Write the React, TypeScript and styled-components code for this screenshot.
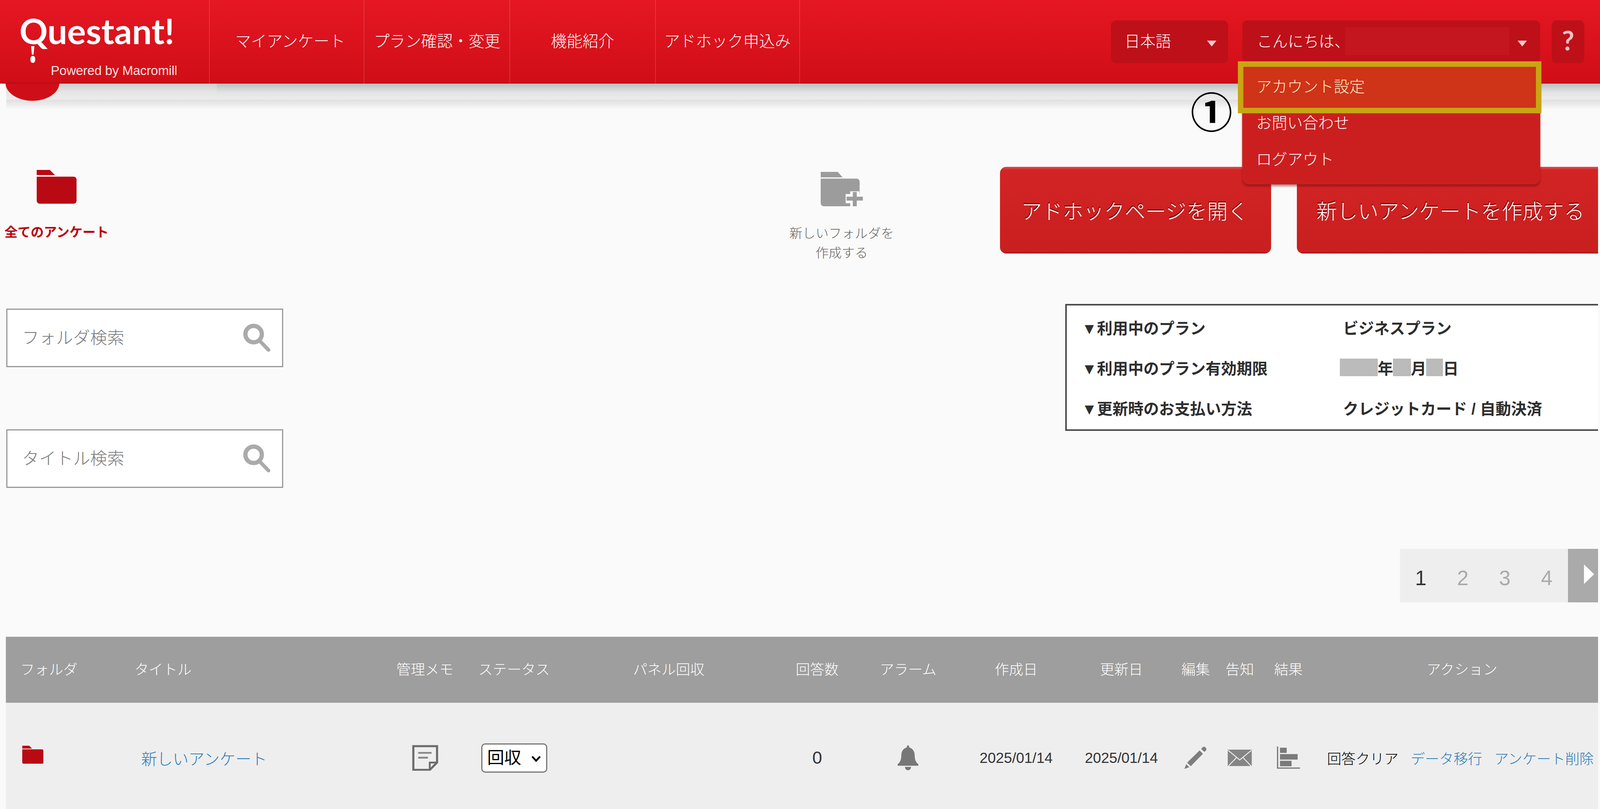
import React from 'react';
import styled, { createGlobalStyle } from 'styled-components';

const SANS = `"Liberation Sans", "Noto Sans CJK JP", sans-serif`;

// The window was asked for at 5259x2071 but measured 4096x2071 (innerWidth, dpr 1), so a
// fixed 5259 wide page is cut off at the right. Horizontal sizes and type therefore follow
// the window width (5259 wide = 1:1 with the design) and vertical sizes stay in px, so the
// page fills the frame at either width. At 4096 the type is 78% of the reference size.
const u = (n: number) => `calc(${n} * 100vw / 5259)`;

const GlobalStyle = createGlobalStyle`
  html, body {
    margin: 0;
    padding: 0;
    background: #fafafa;
  }
  * {
    box-sizing: border-box;
  }
`;

const COLUMNS = [
  { label: 'フォルダ', width: 401, align: 'left', pad: 48 },
  { label: 'タイトル', width: 820, align: 'left', pad: 22 },
  { label: '管理メモ', width: 314, align: 'center', pad: 0 },
  { label: 'ステータス', width: 272, align: 'center', pad: 0 },
  { label: 'パネル回収', width: 744, align: 'center', pad: 0 },
  { label: '回答数', width: 232, align: 'center', pad: 0 },
  { label: 'アラーム', width: 366, align: 'center', pad: 0 },
  { label: '作成日', width: 344, align: 'center', pad: 0 },
  { label: '更新日', width: 348, align: 'center', pad: 0 },
  { label: '編集', width: 140, align: 'center', pad: 0 },
  { label: '告知', width: 150, align: 'center', pad: 0 },
  { label: '結果', width: 170, align: 'center', pad: 0 },
  { label: 'アクション', width: 933, align: 'center', pad: 38 },
];
const GRID = COLUMNS.map((c) => u(c.width)).join(' ');

const NAV_ITEMS = [
  { label: 'マイアンケート', width: 509, shift: 22 },
  { label: 'プラン確認・変更', width: 478, shift: 0 },
  { label: '機能紹介', width: 479, shift: 0 },
  { label: 'アドホック申込み', width: 476, shift: 0 },
];

const Icon = styled.svg<{ $w: number; $h: number }>`
  display: block;
  flex: none;
  width: ${(p) => u(p.$w)};
  height: ${(p) => u(p.$h)};
`;

function FolderIcon(props: { w: number; h: number }) {
  return (
    <Icon $w={props.w} $h={props.h} viewBox="0 0 131 111" preserveAspectRatio="none" fill="#b90a14">
      <path d="M0 0H43L60 17H0Z" />
      <path d="M0 22H121a10 10 0 0 1 10 10V101a10 10 0 0 1-10 10H10a10 10 0 0 1-10-10Z" />
    </Icon>
  );
}

function NewFolderIcon() {
  return (
    <Icon $w={139} $h={113} viewBox="0 0 139 113">
      <path fill="#9c9c9c" d="M0 0H56L72 18H0Z" />
      <path fill="#9c9c9c" d="M0 22H118a10 10 0 0 1 10 10V103a10 10 0 0 1-10 10H10a10 10 0 0 1-10-10Z" />
      <path stroke="#fafafa" strokeWidth="30" d="M112 64V113M82 88H139" />
      <path stroke="#9c9c9c" strokeWidth="13" d="M112 66V113M85 88H139" />
    </Icon>
  );
}

function SearchIcon() {
  return (
    <Icon $w={91} $h={94} viewBox="0 0 91 94" fill="none" stroke="#aaaaaa">
      <circle cx="35" cy="35" r="27" strokeWidth="14" />
      <path d="M56 58L84 87" strokeWidth="12" strokeLinecap="round" />
    </Icon>
  );
}

function MemoIcon() {
  return (
    <Icon $w={86} $h={86} viewBox="0 0 86 86" fill="none" stroke="#6c6c6c">
      <path d="M4 4H82V58L58 82H4Z" strokeWidth="7" />
      <path d="M58 80V58H80" strokeWidth="6" />
      <path d="M20 26H64M20 42H52" strokeWidth="6" stroke="#888888" />
    </Icon>
  );
}

function BellIcon() {
  return (
    <Icon $w={68} $h={82} viewBox="0 0 68 82" fill="#777777">
      <path d="M34 0c3 0 4 3 4 7c12 3 18 14 18 26c0 14 4 23 12 29v5H0v-5c8-6 12-15 12-29c0-12 6-23 18-26c0-4 1-7 4-7Z" />
      <path d="M24 71H44a10 11 0 0 1-20 0Z" />
    </Icon>
  );
}

function PencilIcon() {
  return (
    <Icon $w={73} $h={74} viewBox="0 0 73 74" fill="#7d7d7d">
      <path d="M50 13L61 24L21 65L9 53Z" />
      <path d="M55 8L60 3C63 0 66 0 69 3L71 5C73 8 73 10 71 13L66 18Z" />
      <path d="M6 58L16 68L0 74Z" />
    </Icon>
  );
}

function MailIcon() {
  return (
    <Icon $w={79} $h={55} viewBox="0 0 79 55">
      <rect width="79" height="55" fill="#858585" />
      <path d="M1 2L39.5 34L78 2M2 54L29 26M77 54L50 26" fill="none" stroke="#eeeeee" strokeWidth="3" />
    </Icon>
  );
}

function ChartIcon() {
  return (
    <Icon $w={76} $h={74} viewBox="0 0 76 74">
      <path d="M2 0V71H76" fill="none" stroke="#777777" strokeWidth="4" />
      <rect x="10" y="4" width="22" height="17" fill="#7a7a7a" />
      <rect x="10" y="25" width="58" height="18" fill="#7a7a7a" />
      <rect x="10" y="47" width="38" height="18" fill="#7a7a7a" />
    </Icon>
  );
}

export default function App() {
  return (
    <Page>
      <GlobalStyle />
      <Header>
        <Logo>
          <LogoName>Questant!</LogoName>
          <LogoTagline>Powered by Macromill</LogoTagline>
        </Logo>
        <Nav>
          {NAV_ITEMS.map((item) => (
            <NavItem key={item.label} $width={item.width} $shift={item.shift}>
              {item.label}
            </NavItem>
          ))}
        </Nav>
        <HeaderTools>
          <LanguageBox>
            日本語
            <DropArrow />
          </LanguageBox>
          <UserBox>
            こんにちは、
            <UserMask />
            <DropArrow />
            <UserMenu>
              <MenuItem $highlighted>アカウント設定</MenuItem>
              <MenuItem>お問い合わせ</MenuItem>
              <MenuItem>ログアウト</MenuItem>
              <StepMark>①</StepMark>
            </UserMenu>
          </UserBox>
          <HelpBox>?</HelpBox>
        </HeaderTools>
      </Header>
      <HeaderBand>
        <LogoDrop />
      </HeaderBand>

      <TopArea>
        <SideColumn>
          <AllFolders>
            <IconSlot $height={111}>
              <FolderIcon w={131} h={111} />
            </IconSlot>
            <AllFoldersLabel>全てのアンケート</AllFoldersLabel>
          </AllFolders>
          <SearchBox $top={180}>
            <SearchInput placeholder="フォルダ検索" readOnly />
            <SearchIcon />
          </SearchBox>
          <SearchBox $top={159}>
            <SearchInput placeholder="タイトル検索" readOnly />
            <SearchIcon />
          </SearchBox>
        </SideColumn>

        <NewFolder>
          <IconSlot $height={113}>
            <NewFolderIcon />
          </IconSlot>
          <NewFolderLabel>
            新しいフォルダを
            <br />
            作成する
          </NewFolderLabel>
        </NewFolder>

        <MainColumn>
          <ButtonRow>
            <RedButton $width={891} $pad={70}>アドホックページを開く</RedButton>
            <RedButton $width={990} $pad={64} $squareEnd>新しいアンケートを作成する</RedButton>
          </ButtonRow>
          <PlanBox>
            <PlanRow>
              <PlanLabel>▼利用中のプラン</PlanLabel>
              <PlanValue>ビジネスプラン</PlanValue>
            </PlanRow>
            <PlanRow>
              <PlanLabel>▼利用中のプラン有効期限</PlanLabel>
              <PlanValue $shift={-10}>
                <DateMask $width={124} />年<DateMask $width={58} />月<DateMask $width={55} />日
              </PlanValue>
            </PlanRow>
            <PlanRow>
              <PlanLabel>▼更新時のお支払い方法</PlanLabel>
              <PlanValue>クレジットカード / 自動決済</PlanValue>
            </PlanRow>
          </PlanBox>
        </MainColumn>
      </TopArea>

      <Pager>
        <PagerNumber $current>1</PagerNumber>
        <PagerNumber>2</PagerNumber>
        <PagerNumber>3</PagerNumber>
        <PagerNumber>4</PagerNumber>
        <PagerNext />
      </Pager>

      <Table>
        <HeadRow>
          {COLUMNS.map((col) => (
            <HeadCell key={col.label} $align={col.align} $pad={col.pad}>
              {col.label}
            </HeadCell>
          ))}
        </HeadRow>
        <BodyRow>
          <Cell $align="left" $pad={54}>
            <RowFolder>
              <FolderIcon w={70} h={60} />
            </RowFolder>
          </Cell>
          <Cell $align="left" $pad={44}>
            <TitleLink>新しいアンケート</TitleLink>
          </Cell>
          <Cell>
            <MemoIcon />
          </Cell>
          <Cell>
            <StatusPicker>
              <StatusSelect defaultValue="回収">
                <option>回収</option>
              </StatusSelect>
              <StatusChevron viewBox="0 0 32 22" fill="none" stroke="#111111" strokeWidth="6">
                <path d="M3 4L16 18L29 4" />
              </StatusChevron>
            </StatusPicker>
          </Cell>
          <Cell />
          <Cell>
            <CountText>0</CountText>
          </Cell>
          <Cell>
            <BellIcon />
          </Cell>
          <Cell>
            <DateText>2025/01/14</DateText>
          </Cell>
          <Cell>
            <DateText>2025/01/14</DateText>
          </Cell>
          <Cell>
            <PencilIcon />
          </Cell>
          <Cell>
            <MailIcon />
          </Cell>
          <Cell>
            <ChartIcon />
          </Cell>
          <Cell $align="left" $pad={42}>
            <Actions>
              <ActionText>回答クリア</ActionText>
              <ActionLink>データ移行</ActionLink>
              <ActionLink>アンケート削除</ActionLink>
            </Actions>
          </Cell>
        </BodyRow>
      </Table>
    </Page>
  );
}

const Page = styled.div`
  position: relative;
  width: 100vw;
  height: 2071px;
  overflow: hidden;
  background: #fafafa;
  font-family: ${SANS};
`;

const Header = styled.header`
  position: relative;
  z-index: 2;
  display: flex;
  align-items: center;
  height: 214px;
  padding-right: ${u(51)};
  background: linear-gradient(180deg, #e51723 0%, #d00e17 98%, #b00c14 100%);
`;

const Logo = styled.div`
  display: flex;
  flex-direction: column;
  flex: none;
  width: ${u(687)};
  height: 214px;
  padding: 14px 0 0 ${u(64)};
  color: #ffffff;
`;

const LogoName = styled.div`
  position: relative;
  font-family: Lato, "Liberation Sans", sans-serif;
  font-size: ${u(115)};
  font-weight: 700;
  line-height: 130px;
  white-space: nowrap;

  &::before {
    content: '';
    position: absolute;
    left: ${u(38)};
    top: 104px;
    width: ${u(11)};
    height: 22px;
    background: #ffffff;
    clip-path: polygon(0 0, 100% 0, 75% 100%, 25% 100%);
  }

  &::after {
    content: '';
    position: absolute;
    left: ${u(36)};
    top: 129px;
    width: ${u(15)};
    height: 18px;
    border-radius: 7px;
    background: #ffffff;
  }
`;

const LogoTagline = styled.div`
  margin: 14px 0 0 ${u(103)};
  font-size: ${u(43)};
  line-height: 46px;
  letter-spacing: -0.3px;
  opacity: 0.88;
  white-space: nowrap;
`;

const Nav = styled.nav`
  display: flex;
  flex: none;
  height: 100%;
`;

const NavItem = styled.a<{ $width: number; $shift: number }>`
  display: flex;
  align-items: center;
  justify-content: center;
  width: ${(p) => u(p.$width)};
  padding-left: ${(p) => u(p.$shift)};
  padding-bottom: 10px;
  border-left: 2px solid rgba(255, 255, 255, 0.14);
  color: #ffffff;
  font-size: ${u(52)};
  font-weight: 300;
  white-space: nowrap;

  &:last-child {
    border-right: 2px solid rgba(255, 255, 255, 0.14);
  }
`;

const HeaderTools = styled.div`
  display: flex;
  gap: ${u(38)};
  margin-left: auto;
`;

const ToolBox = styled.div`
  position: relative;
  display: flex;
  flex: none;
  align-items: center;
  height: 110px;
  padding-bottom: 10px;
  border-radius: 14px;
  background: #be1019;
  color: #ffffff;
  font-size: ${u(51)};
  font-weight: 300;
  white-space: nowrap;
`;

const LanguageBox = styled(ToolBox)`
  justify-content: space-between;
  width: ${u(384)};
  margin-right: ${u(9)};
  padding-left: ${u(44)};
  padding-right: ${u(38)};
`;

const UserBox = styled(ToolBox)`
  justify-content: space-between;
  width: ${u(979)};
  padding-left: ${u(48)};
  padding-right: ${u(43)};
`;

const UserMask = styled.span`
  position: absolute;
  left: ${u(339)};
  top: 18px;
  width: ${u(539)};
  height: 71px;
  background: #c4161f;
`;

const DropArrow = styled.span`
  flex: none;
  width: 0;
  height: 0;
  margin-top: 18px;
  border-left: ${u(16)} solid transparent;
  border-right: ${u(16)} solid transparent;
  border-top: ${u(20)} solid rgba(255, 255, 255, 0.78);
`;

const HelpBox = styled(ToolBox)`
  justify-content: center;
  width: ${u(108)};
  color: rgba(255, 255, 255, 0.75);
  font-family: Lato, "Liberation Sans", sans-serif;
  font-size: ${u(88)};
  font-weight: 700;
`;

const UserMenu = styled.div`
  position: absolute;
  left: 0;
  top: 105px;
  width: ${u(979)};
  height: 315px;
  padding-top: 15px;
  border-radius: 0 0 16px 16px;
  background: #cb1f1f;
  box-shadow: 0 5px 5px rgba(90, 10, 10, 0.45);
`;

const MenuItem = styled.div<{ $highlighted?: boolean }>`
  position: relative;
  z-index: ${(p) => (p.$highlighted ? 1 : 'auto')};
  display: flex;
  align-items: center;
  height: 93px;
  padding-left: ${u(46)};
  color: ${(p) => (p.$highlighted ? '#ffeccb' : '#ffffff')};
  font-size: ${u(51)};
  font-weight: 300;

  &::before {
    content: ${(p) => (p.$highlighted ? "''" : 'none')};
    position: absolute;
    z-index: -1;
    top: -15px;
    left: ${u(-14)};
    right: ${u(-5)};
    bottom: -25px;
    border: 14px solid #c8a512;
    background: #cf3318;
  }
`;

const StepMark = styled.span`
  position: absolute;
  left: ${u(-170)};
  top: 39px;
  color: #000000;
  font-family: "Noto Sans CJK JP", sans-serif;
  font-size: ${u(138)};
  font-weight: 700;
  line-height: 170px;
`;

const HeaderBand = styled.div`
  position: relative;
  height: 41px;
  margin-left: ${u(20)};
  background: linear-gradient(180deg, #b8c0c0 0%, #e2e4e4 55%, #ececec 100%);

  &::before {
    content: '';
    position: absolute;
    left: 0;
    top: 0;
    width: ${u(693)};
    height: 100%;
    background: linear-gradient(180deg, #cfcfcf 0%, #e6e6e6 55%, #ececec 100%);
  }

  &::after {
    content: '';
    position: absolute;
    left: 0;
    right: 0;
    top: 100%;
    height: 26px;
    background: linear-gradient(180deg, #dfdfdf 0%, #fafafa 100%);
  }
`;

const LogoDrop = styled.div`
  position: absolute;
  z-index: 1;
  left: ${u(-2)};
  top: -2px;
  width: ${u(177)};
  height: 46px;
  border-radius: 0 0 50% 50% / 0 0 100% 100%;
  background: #cf0f18;
`;

const TopArea = styled.div`
  display: flex;
  height: 1150px;
`;

const IconSlot = styled.div<{ $height: number }>`
  display: flex;
  flex: none;
  align-items: center;
  justify-content: center;
  height: ${(p) => p.$height}px;
`;

const SideColumn = styled.div`
  display: flex;
  flex-direction: column;
  flex: none;
  width: ${u(951)};
  padding-top: 168px;
`;

const AllFolders = styled.div`
  display: flex;
  flex-direction: column;
  align-items: center;
  width: ${u(372)};
  height: 187px;
`;

const AllFoldersLabel = styled.div`
  margin-top: 31px;
  color: #b80010;
  font-size: ${u(43)};
  font-weight: 700;
  line-height: 60px;
  white-space: nowrap;
`;

const SearchBox = styled.div<{ $top: number }>`
  display: flex;
  align-items: center;
  justify-content: space-between;
  width: ${u(911)};
  height: 150px;
  margin: ${(p) => p.$top}px 0 0 ${u(20)};
  padding: 0 ${u(37)} 0 ${u(46)};
  border: 3px solid #999999;
  background: #ffffff;
`;

const SearchInput = styled.input`
  width: ${u(600)};
  border: 0;
  outline: 0;
  background: transparent;
  color: #777777;
  font-family: ${SANS};
  font-size: ${u(56)};
  font-weight: 300;

  &::placeholder {
    color: #7a7a7a;
    opacity: 1;
  }
`;

const NewFolder = styled.div`
  display: flex;
  flex-direction: column;
  flex: none;
  align-items: center;
  width: ${u(345)};
  margin-left: ${u(1643)};
  padding-top: 172px;
`;

const NewFolderLabel = styled.div`
  margin-top: 33px;
  color: #666666;
  font-size: ${u(43)};
  font-weight: 300;
  line-height: 50px;
  text-align: center;
  white-space: nowrap;
`;

const MainColumn = styled.div`
  display: flex;
  flex-direction: column;
  margin-left: ${u(348)};
  padding-top: 172px;
`;

const ButtonRow = styled.div`
  display: flex;
  gap: ${u(85)};
`;

const RedButton = styled.a<{ $width: number; $pad: number; $squareEnd?: boolean }>`
  display: flex;
  flex: none;
  align-items: center;
  width: ${(p) => u(p.$width)};
  height: 222px;
  padding-left: ${(p) => u(p.$pad)};
  border-radius: ${(p) => (p.$squareEnd ? '16px 0 0 16px' : '16px')};
  background: linear-gradient(180deg, #de5353 0, #d32424 8px, #c91f1f 98%, #8e1a1a 100%);
  color: #ffffff;
  font-size: ${u(68)};
  font-weight: 300;
  text-shadow: -1px -3px 0 #7a0000;
  white-space: nowrap;
`;

const PlanBox = styled.div`
  display: flex;
  flex-direction: column;
  justify-content: center;
  width: ${u(1752)};
  height: 325px;
  margin: 129px 0 0 ${u(214)};
  padding-left: ${u(49)};
  border: 4px solid #4a4a4a;
  border-right: 0;
  background: #ffffff;
`;

const PlanRow = styled.div`
  display: flex;
  align-items: center;
  height: 103px;
  color: #2e2e2e;
  font-size: ${u(51)};
  font-weight: 700;
  white-space: nowrap;
`;

const PlanLabel = styled.span`
  flex: none;
  width: ${u(859)};
`;

const PlanValue = styled.span<{ $shift?: number }>`
  display: flex;
  align-items: center;
  margin-left: ${(p) => u(p.$shift || 0)};
`;

const DateMask = styled.span<{ $width: number }>`
  display: inline-block;
  width: ${(p) => u(p.$width)};
  height: 45px;
  background: #bbbbbb;
`;

const Pager = styled.div`
  display: flex;
  width: ${u(652)};
  height: 137px;
  margin-left: ${u(4601)};
  background: #eeeeee;
`;

const PagerNumber = styled.span<{ $current?: boolean }>`
  display: flex;
  align-items: center;
  justify-content: center;
  width: ${u(138)};
  padding-top: 12px;
  color: ${(p) => (p.$current ? '#333333' : '#aaaaaa')};
  font-size: ${u(68)};
`;

const PagerNext = styled.span`
  display: flex;
  align-items: center;
  width: ${u(99)};
  margin-left: auto;
  padding-left: ${u(52)};
  background: #aaaaaa;

  &::before {
    content: '';
    margin-top: -8px;
    border-left: ${u(34)} solid #ffffff;
    border-top: 25px solid transparent;
    border-bottom: 25px solid transparent;
  }
`;

const Table = styled.div`
  width: ${u(5234)};
  margin: 88px 0 0 ${u(19)};
`;

const HeadRow = styled.div`
  display: grid;
  grid-template-columns: ${GRID};
  height: 169px;
  background: #9e9e9e;
`;

const alignToFlex = (align?: string) => (align === 'left' ? 'flex-start' : 'center');

const HeadCell = styled.div<{ $align?: string; $pad?: number }>`
  display: flex;
  align-items: center;
  justify-content: ${(p) => alignToFlex(p.$align)};
  padding-left: ${(p) => u(p.$pad || 0)};
  padding-bottom: 6px;
  color: #ffffff;
  font-size: ${u(47)};
  font-weight: 300;
  white-space: nowrap;
`;

const BodyRow = styled.div`
  display: grid;
  grid-template-columns: ${GRID};
  height: 282px;
  background: #eeeeee;
`;

const Cell = styled.div<{ $align?: string; $pad?: number }>`
  display: flex;
  align-items: center;
  justify-content: ${(p) => alignToFlex(p.$align)};
  padding-left: ${(p) => u(p.$pad || 0)};
`;

const RowFolder = styled.div`
  display: flex;
  margin-bottom: 16px;
`;

const TitleLink = styled.a`
  color: #2b7cb8;
  font-size: ${u(52)};
  font-weight: 300;
  white-space: nowrap;
`;

const StatusPicker = styled.div`
  position: relative;
  display: flex;
`;

const StatusSelect = styled.select`
  appearance: none;
  width: ${u(217)};
  height: 75px;
  padding-left: ${u(16)};
  border: 3px solid #777777;
  border-radius: 10px;
  background-color: #ffffff;
  color: #000000;
  font-family: ${SANS};
  font-size: ${u(56)};
`;

const StatusChevron = styled.svg`
  position: absolute;
  right: ${u(20)};
  top: 28px;
  width: ${u(32)};
  height: 22px;
`;

const CountText = styled.span`
  color: #333333;
  font-size: ${u(58)};
`;

const DateText = styled.span`
  color: #333333;
  font-size: ${u(48)};
`;

const Actions = styled.div`
  display: flex;
  gap: ${u(40)};
  font-size: ${u(47)};
  font-weight: 300;
  white-space: nowrap;
`;

const ActionText = styled.span`
  color: #000000;
`;

const ActionLink = styled.a`
  color: #2b7cb8;
`;
